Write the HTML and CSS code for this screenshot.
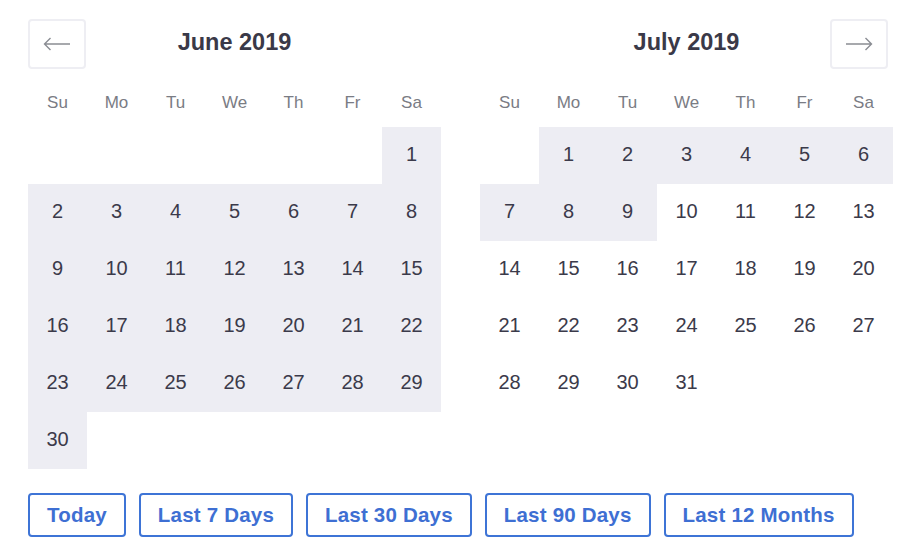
FILE: index.html
```html
<!DOCTYPE html>
<html lang="en">
  <head>
    <meta charset="UTF-8" />
    <link rel="stylesheet" href="styles.css">
    <title>Date Range Picker</title>
  </head>
  <body>
    <div class="picker">
      <div class="months">
        <div class="month">
          <div class="month-header">
            <button class="nav-btn" aria-label="Previous month">
              <svg width="28" height="14" viewBox="0 0 28 14"><path d="M27 7H1.5M7.5 1L1.5 7l6 6" fill="none" stroke="#8a8d93" stroke-width="1.4"/></svg>
            </button>
            <div class="month-title">June 2019</div>
            <div class="nav-spacer"></div>
          </div>
          <div class="weekdays">
            <span>Su</span><span>Mo</span><span>Tu</span><span>We</span><span>Th</span><span>Fr</span><span>Sa</span>
          </div>
          <div class="days">
            <span class="day"></span><span class="day"></span><span class="day"></span><span class="day"></span><span class="day"></span><span class="day"></span>
            <span class="day in-range">1</span>
            <span class="day in-range">2</span><span class="day in-range">3</span><span class="day in-range">4</span><span class="day in-range">5</span><span class="day in-range">6</span><span class="day in-range">7</span><span class="day in-range">8</span>
            <span class="day in-range">9</span><span class="day in-range">10</span><span class="day in-range">11</span><span class="day in-range">12</span><span class="day in-range">13</span><span class="day in-range">14</span><span class="day in-range">15</span>
            <span class="day in-range">16</span><span class="day in-range">17</span><span class="day in-range">18</span><span class="day in-range">19</span><span class="day in-range">20</span><span class="day in-range">21</span><span class="day in-range">22</span>
            <span class="day in-range">23</span><span class="day in-range">24</span><span class="day in-range">25</span><span class="day in-range">26</span><span class="day in-range">27</span><span class="day in-range">28</span><span class="day in-range">29</span>
            <span class="day in-range">30</span>
          </div>
        </div>

        <div class="month">
          <div class="month-header">
            <div class="nav-spacer"></div>
            <div class="month-title">July 2019</div>
            <button class="nav-btn nav-next" aria-label="Next month">
              <svg width="28" height="14" viewBox="0 0 28 14"><path d="M1 7h25.5M20.5 1l6 6-6 6" fill="none" stroke="#8a8d93" stroke-width="1.4"/></svg>
            </button>
          </div>
          <div class="weekdays">
            <span>Su</span><span>Mo</span><span>Tu</span><span>We</span><span>Th</span><span>Fr</span><span>Sa</span>
          </div>
          <div class="days">
            <span class="day"></span>
            <span class="day in-range">1</span><span class="day in-range">2</span><span class="day in-range">3</span><span class="day in-range">4</span><span class="day in-range">5</span><span class="day in-range">6</span>
            <span class="day in-range">7</span><span class="day in-range">8</span><span class="day in-range">9</span><span class="day">10</span><span class="day">11</span><span class="day">12</span><span class="day">13</span>
            <span class="day">14</span><span class="day">15</span><span class="day">16</span><span class="day">17</span><span class="day">18</span><span class="day">19</span><span class="day">20</span>
            <span class="day">21</span><span class="day">22</span><span class="day">23</span><span class="day">24</span><span class="day">25</span><span class="day">26</span><span class="day">27</span>
            <span class="day">28</span><span class="day">29</span><span class="day">30</span><span class="day">31</span>
          </div>
        </div>
      </div>

      <div class="presets">
        <button class="preset">Today</button>
        <button class="preset">Last 7 Days</button>
        <button class="preset">Last 30 Days</button>
        <button class="preset">Last 90 Days</button>
        <button class="preset">Last 12 Months</button>
      </div>
    </div>
  </body>
</html>
```

FILE: styles.css
```css
body {
  margin: 0;
  padding: 0;
  background-color: white;
  font-family: "Liberation Sans", Arial, sans-serif;
  color: #3b3a4a;
}

.picker {
  padding: 19px 0 0 28px;
}

.months {
  display: flex;
  gap: 39px;
}

.month {
  width: 413px;
}

.month-header {
  display: grid;
  grid-template-columns: 58px 1fr 58px;
  align-items: center;
  height: 50px;
}

.month-title {
  text-align: center;
  font-size: 23.5px;
  font-weight: 700;
  color: #3a3948;
  margin-top: -4px;
}

.nav-btn {
  width: 58px;
  height: 50px;
  padding: 0;
  background-color: white;
  border: 2px solid #eeeef3;
  border-radius: 4px;
  display: flex;
  align-items: center;
  justify-content: center;
  cursor: pointer;
}

.nav-next {
  margin-left: -5px;
}

.weekdays {
  display: grid;
  grid-template-columns: repeat(7, 59px);
  padding: 22px 0 12px;
  font-size: 17px;
  line-height: 24px;
  color: #7a7c84;
  text-align: center;
}

.days {
  display: grid;
  grid-template-columns: repeat(7, 59px);
  grid-auto-rows: 57px;
}

.day {
  display: flex;
  align-items: center;
  justify-content: center;
  font-size: 20px;
  padding-bottom: 2px;
}

.in-range {
  background-color: #ededf3;
}

.presets {
  display: flex;
  gap: 13px;
  margin-top: 24px;
}

.preset {
  height: 44px;
  padding: 0 17px;
  background-color: white;
  border: 2px solid #3e74d6;
  border-radius: 4px;
  color: #3e6fd3;
  font-family: "Liberation Sans", Arial, sans-serif;
  font-size: 20.5px;
  font-weight: 700;
  letter-spacing: 0.2px;
  cursor: pointer;
}
```
